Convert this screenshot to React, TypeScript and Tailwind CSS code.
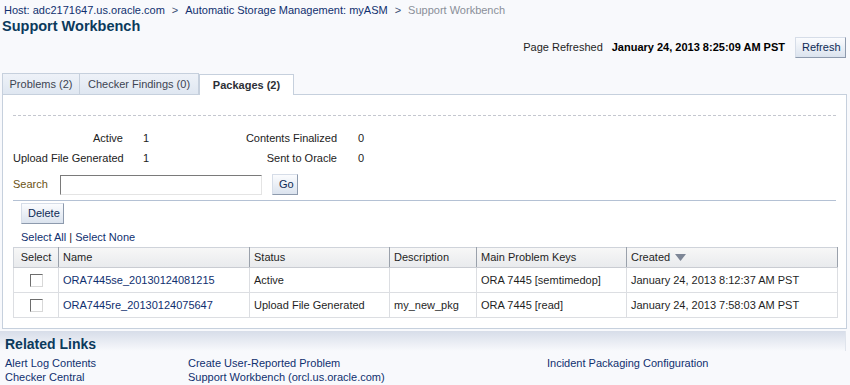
export default function App() {
  const rows = [
    {
      name: "ORA7445se_20130124081215",
      status: "Active",
      desc: "",
      key: "ORA 7445 [semtimedop]",
      created: "January 24, 2013 8:12:37 AM PST",
    },
    {
      name: "ORA7445re_20130124075647",
      status: "Upload File Generated",
      desc: "my_new_pkg",
      key: "ORA 7445 [read]",
      created: "January 24, 2013 7:58:03 AM PST",
    },
  ];

  const btn =
    "h-[21px] px-[6px] border border-t-[#d6dde8] border-l-[#d6dde8] border-r-[#8d9aad] border-b-[#8d9aad] bg-gradient-to-b from-[#fbfcfe] to-[#dbe3ee] text-[#0e2a55] text-[11px] leading-[19px]";

  return (
    <div className="w-[850px] h-[385px] overflow-hidden bg-[#f8f9fc] text-[11px] text-[#1f1f1f] font-['Liberation_Sans',Arial,sans-serif] flex flex-col">
      {/* breadcrumb */}
      <div className="flex items-center gap-[4px] px-[4px] pt-[3px] h-[17px] text-[#10306f] whitespace-nowrap">
        <span>Host: adc2171647.us.oracle.com</span>
        <span className="text-[#3b4f74] px-[3px]">&gt;</span>
        <span>Automatic Storage Management: myASM</span>
        <span className="text-[#3b4f74] px-[3px]">&gt;</span>
        <span className="text-[#8a8f99]">Support Workbench</span>
      </div>
      <h1 className="px-[2px] mt-[1px] text-[14.5px] leading-[17px] font-bold text-[#0b3a5c]">Support Workbench</h1>

      {/* refresh row */}
      <div className="flex items-center justify-end gap-[9px] pr-[4px] mt-[2px] h-[21px]">
        <span>Page Refreshed</span>
        <span className="font-bold text-black mr-[1px]">January 24, 2013 8:25:09 AM PST</span>
        <button className={btn + " w-[51px]"}>Refresh</button>
      </div>

      {/* tabs */}
      <div className="flex mt-[15px] px-[2px] h-[21px]">
        <div className="w-[78px] border border-[#c6d0dd] border-b-0 bg-gradient-to-b from-[#eef2f8] to-[#dfe7f1] text-[#3d4452] flex items-center justify-center">
          Problems (2)
        </div>
        <div className="w-[119px] border border-l-0 border-[#c6d0dd] border-b-0 bg-gradient-to-b from-[#eef2f8] to-[#dfe7f1] text-[#3d4452] flex items-center justify-center">
          Checker Findings (0)
        </div>
        <div className="w-[95px] border border-[#c6d0dd] border-b-0 bg-white font-bold text-[#2c2f36] flex items-center justify-center relative top-[1px] h-[21px] z-10">
          Packages (2)
        </div>
      </div>

      {/* panel */}
      <div className="mx-[2px] w-[845px] border border-[#c6d0dd] bg-white px-[10px] pt-[20px] pb-[10px]">
        <div className="border-t border-dashed border-[#c4c7cf]" />

        <div className="grid grid-cols-[110px_114px_100px_30px] mt-[12px] text-[#222] whitespace-nowrap">
          <div className="text-right h-[20px] leading-[20px]">Active</div>
          <div className="pl-[20px] h-[20px] leading-[20px]">1</div>
          <div className="text-right h-[20px] leading-[20px]">Contents Finalized</div>
          <div className="pl-[21px] h-[20px] leading-[20px]">0</div>
          <div className="text-right h-[20px] leading-[20px]">Upload File Generated</div>
          <div className="pl-[20px] h-[20px] leading-[20px]">1</div>
          <div className="text-right h-[20px] leading-[20px]">Sent to Oracle</div>
          <div className="pl-[21px] h-[20px] leading-[20px]">0</div>
        </div>

        <div className="flex items-center mt-[6px] h-[21px]">
          <span className="text-[#6b5314] w-[47px]">Search</span>
          <div className="w-[202px] h-[20px] border border-t-[#7a7a7a] border-l-[#7a7a7a] border-r-[#e4e4e4] border-b-[#e4e4e4] bg-white" />
          <button className={btn + " ml-[10px] w-[26px] px-0 h-[20px]"}>Go</button>
        </div>

        <div className="border-t border-[#b4c1d4] mt-[5px]" />

        <div className="pl-[8px] pt-[2px]">
          <button className={btn + " w-[43px] px-0"}>Delete</button>
          <div className="mt-[6px] h-[14px] leading-[14px] text-[#10306f]">
            Select All <span className="text-[#222]">|</span> Select None
          </div>
        </div>

        <table className="mt-[3px] w-[825px] border-collapse border border-[#cfd3da] text-[#1f1f1f]">
          <thead>
            <tr className="h-[20px] bg-gradient-to-b from-[#f7f7f7] to-[#e8eaed]">
              <th className="w-[45px] font-normal text-center border-r border-[#9aa1ab] border-b border-b-[#c9ccd2]">Select</th>
              <th className="w-[191px] font-normal text-left pl-[4px] border-r border-[#9aa1ab] border-b border-b-[#c9ccd2]">Name</th>
              <th className="w-[140px] font-normal text-left pl-[4px] border-r border-[#9aa1ab] border-b border-b-[#c9ccd2]">Status</th>
              <th className="w-[87px] font-normal text-left pl-[4px] border-r border-[#9aa1ab] border-b border-b-[#c9ccd2]">Description</th>
              <th className="w-[150px] font-normal text-left pl-[4px] border-r border-[#9aa1ab] border-b border-b-[#c9ccd2]">Main Problem Keys</th>
              <th className="font-normal text-left pl-[4px] border-b border-b-[#c9ccd2] border-r border-[#9aa1ab]">
                <span className="inline-flex items-center gap-[5px]">
                  Created
                  <svg width="11" height="7" viewBox="0 0 11 7">
                    <path d="M0 0 H11 L5.5 7 Z" fill="#7d8696" />
                  </svg>
                </span>
              </th>
            </tr>
          </thead>
          <tbody>
            {rows.map((r) => (
              <tr key={r.name} className="h-[25px]">
                <td className="border border-[#dcdee2] text-center">
                  <span className="inline-block align-middle w-[13px] h-[13px] border border-t-[#6d6d6d] border-l-[#6d6d6d] border-r-[#d8d8d8] border-b-[#d8d8d8] bg-white" />
                </td>
                <td className="border border-[#dcdee2] pl-[4px] text-[#10306f]">{r.name}</td>
                <td className="border border-[#dcdee2] pl-[4px]">{r.status}</td>
                <td className="border border-[#dcdee2] pl-[4px]">{r.desc}</td>
                <td className="border border-[#dcdee2] pl-[4px]">{r.key}</td>
                <td className="border border-[#dcdee2] pl-[4px]">{r.created}</td>
              </tr>
            ))}
          </tbody>
        </table>
      </div>

      {/* related links */}
      <div className="mt-[2px] pr-[4px]">
        <div className="h-[20px] bg-gradient-to-b from-[#d7dde9] to-[#f8f9fc] border-r border-[#dfe4ec]" />
        <div className="px-[5px] -mt-[15px] text-[14px] leading-[17px] font-bold text-[#0b3a5c]">Related Links</div>
        <div className="grid grid-cols-[183px_359px_1fr] px-[5px] mt-[3px] text-[#10306f] leading-[14px]">
          <div>Alert Log Contents</div>
          <div>Create User-Reported Problem</div>
          <div>Incident Packaging Configuration</div>
          <div>Checker Central</div>
          <div>Support Workbench (orcl.us.oracle.com)</div>
          <div />
        </div>
      </div>
    </div>
  );
}
